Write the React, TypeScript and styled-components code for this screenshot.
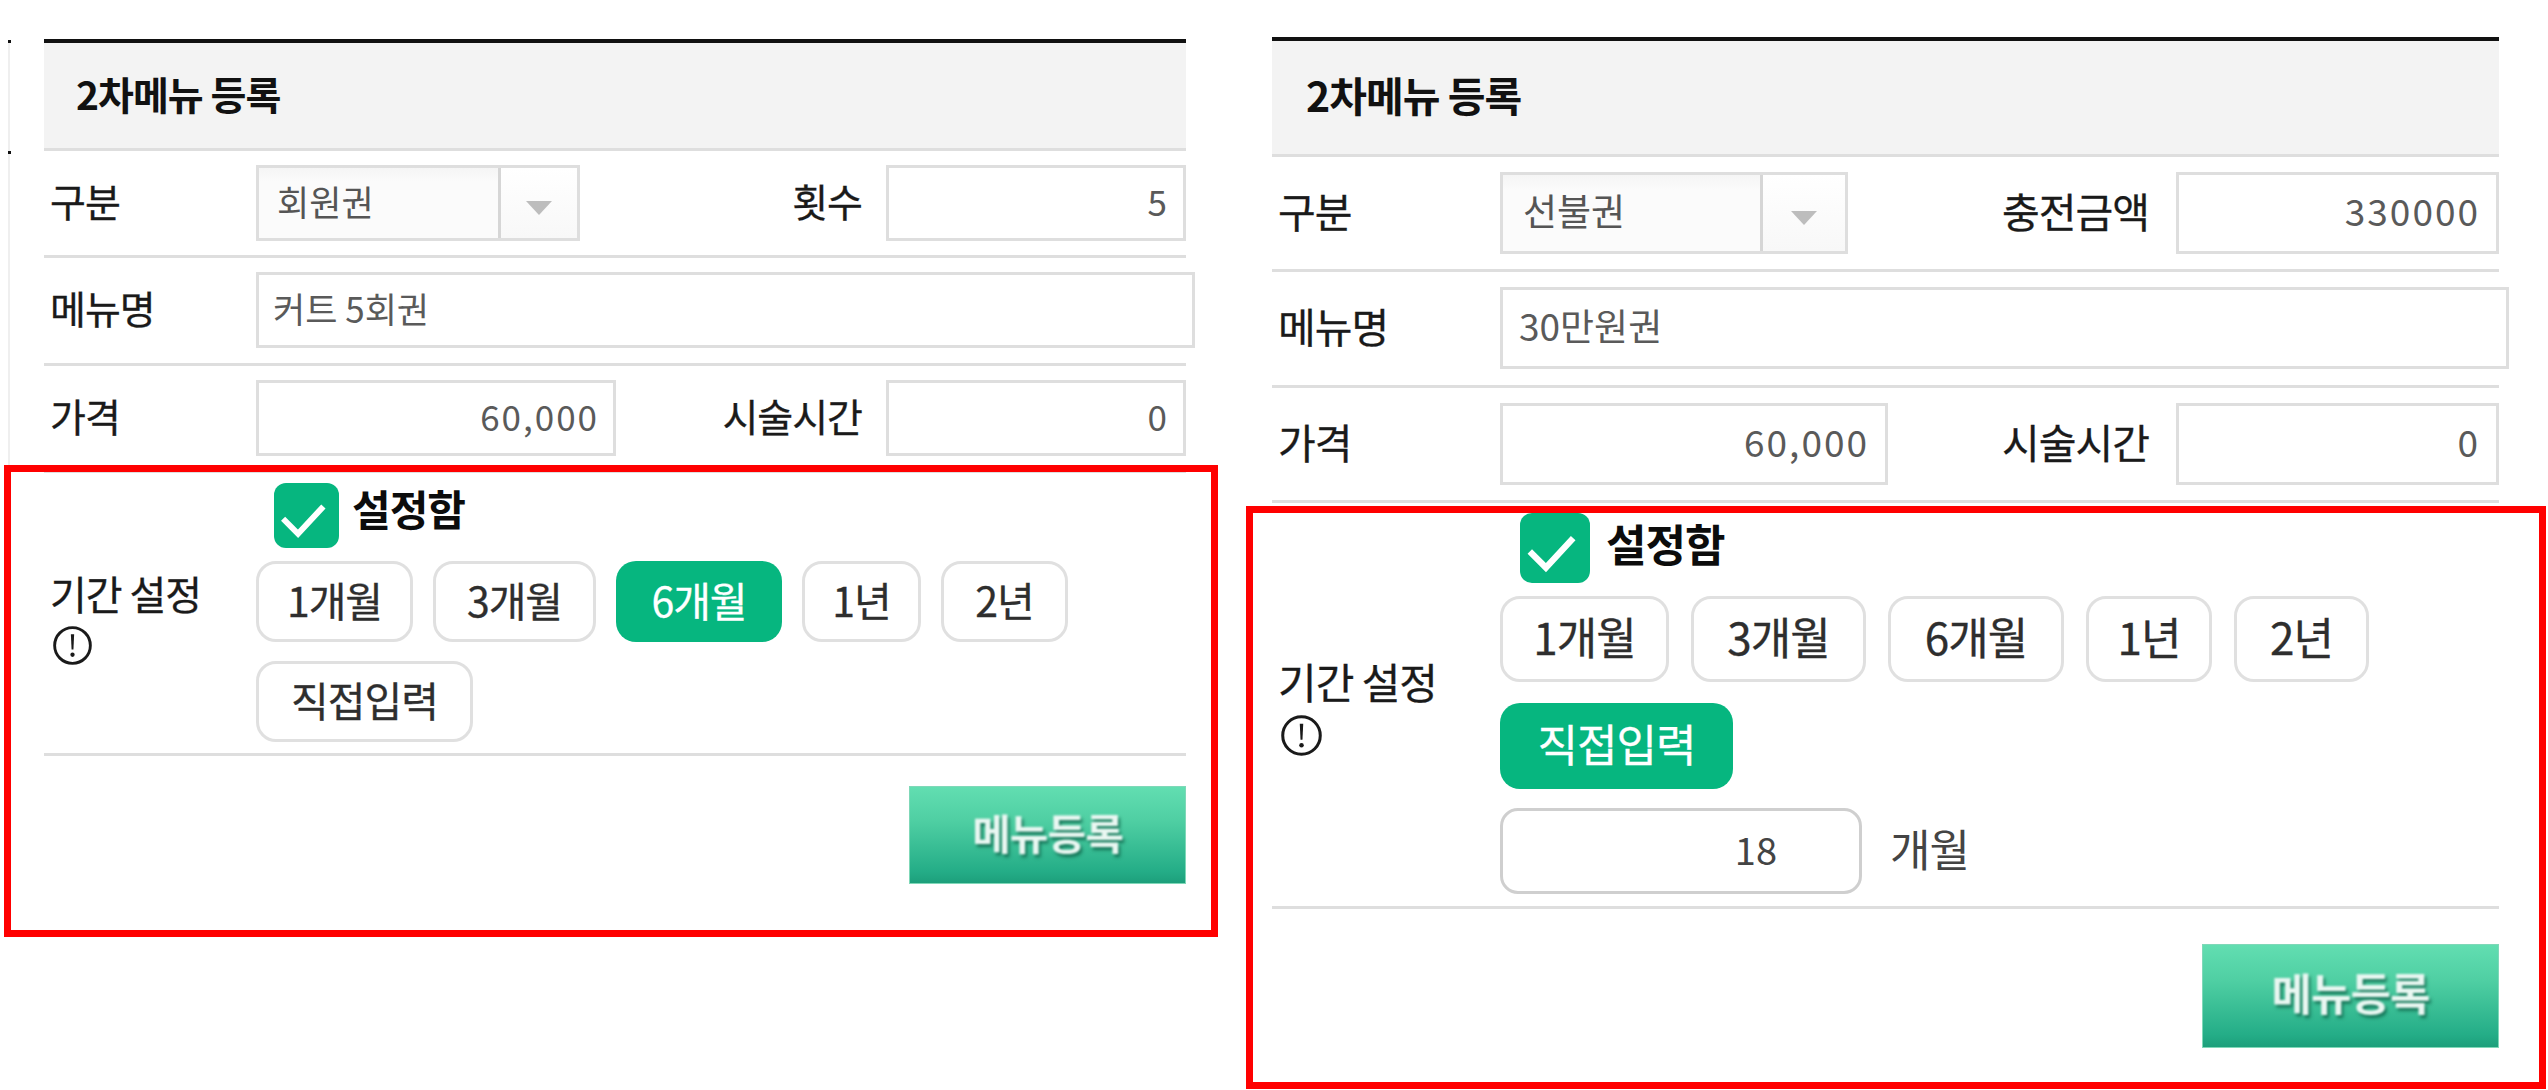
import * as React from "react";
import styled, { createGlobalStyle, ThemeProvider } from "styled-components";

const GlobalStyle = createGlobalStyle`
  html, body {
    margin: 0;
    padding: 0;
    background: #ffffff;
  }
  * {
    box-sizing: border-box;
  }
`;

const smallTheme = {
  top: 39,
  left: 44,
  width: 1142,
  headH: 105,
  headPad: 32,
  headFont: 39,
  headLift: 6,
  rowPad: 14,
  labelW: 212,
  fieldH: 76,
  font: 39,
  valueFont: 35,
  boxPad: 14,
  selectPad: 18,
  selectW: 324,
  arrowW: 76,
  sideLabelGap: 24,
  sideW: 300,
  nameW: 939,
  priceW: 360,
  checkH: 65,
  checkLeft: 18,
  checkGap: 13,
  checkFont: 42,
  checkLift: 16,
  pillH: 81,
  pillGap: 20,
  pillRowGap: 19,
  pillFont: 41,
  periodFont: 40,
  periodTop: 12,
  sectionTop: 10,
  sectionGap: 13,
  sectionBottom: 11,
  infoSize: 39,
  buttonW: 277,
  buttonH: 98,
  buttonTop: 30,
  buttonFont: 42,
  frameTop: -8,
  frameLeft: -40,
  frameRight: -32,
  frameBottom: -53,
};

const largeTheme = {
  top: 37,
  left: 86,
  width: 1227,
  headH: 113,
  headPad: 34,
  headFont: 41,
  headLift: 8,
  rowPad: 15,
  labelW: 228,
  fieldH: 82,
  font: 41,
  valueFont: 37,
  boxPad: 16,
  selectPad: 20,
  selectW: 348,
  arrowW: 82,
  sideLabelGap: 27,
  sideW: 323,
  nameW: 1009,
  priceW: 388,
  checkH: 70,
  checkLeft: 20,
  checkGap: 16,
  checkFont: 44,
  checkLift: 10,
  pillH: 86,
  pillGap: 22,
  pillRowGap: 21,
  pillFont: 44,
  periodFont: 42,
  periodTop: 8,
  sectionTop: 10,
  sectionGap: 13,
  sectionBottom: 12,
  infoSize: 41,
  buttonW: 297,
  buttonH: 104,
  buttonTop: 35,
  buttonFont: 44,
  frameTop: 3,
  frameLeft: -26,
  frameRight: -47,
  frameBottom: -41,
};

type Metrics = typeof smallTheme;
const m = (key: keyof Metrics) => (p: { theme?: unknown }) => (p.theme as Metrics)[key];

const Page = styled.div`
  position: relative;
  display: flex;
  align-items: flex-start;
  width: 2548px;
  height: 1090px;
  overflow: hidden;
  font-family: "Noto Sans CJK KR", "Noto Sans", sans-serif;
  color: #222222;
`;

/* leftover crop marks along the left edge of the first capture */
const CropEdge = styled.div`
  position: absolute;
  top: 40px;
  left: 8px;
  width: 2px;
  height: 426px;
  background: #efefef;
  &::before,
  &::after {
    content: "";
    position: absolute;
    left: 0;
    width: 3px;
    height: 3px;
    background: #111111;
  }
  &::before {
    top: 0;
  }
  &::after {
    top: 111px;
  }
`;

const Panel = styled.section`
  flex: none;
  width: ${m("width")}px;
  margin-top: ${m("top")}px;
  margin-left: ${m("left")}px;
  border-top: 4px solid #111111;
`;

const Head = styled.header`
  display: flex;
  align-items: center;
  height: ${(p) => (p.theme as Metrics).headH - (p.theme as Metrics).headLift}px;
  padding: 0 0 ${m("headLift")}px ${m("headPad")}px;
  background: #f3f3f3;
  border-bottom: 3px solid #dedede;
  font-size: ${m("headFont")}px;
  font-weight: 700;
  letter-spacing: -1px;
  color: #111111;
  box-sizing: content-box;
`;

const Row = styled.div<{ $tall?: boolean }>`
  display: flex;
  align-items: center;
  padding-top: ${m("rowPad")}px;
  padding-bottom: ${(p) => (p.theme as Metrics).rowPad + (p.$tall ? 1 : 0)}px;
  border-bottom: 3px solid #dedede;
`;

const Label = styled.div`
  flex: none;
  width: ${m("labelW")}px;
  padding: 0 0 6px 6px;
  font-size: ${m("font")}px;
  line-height: 1;
  letter-spacing: -1px;
  color: #1a1a1a;
  -webkit-text-stroke: 0.3px #1a1a1a;
`;

const SideLabel = styled.div`
  flex: 1;
  padding: 0 ${m("sideLabelGap")}px 6px 0;
  text-align: right;
  font-size: ${m("font")}px;
  line-height: 1;
  letter-spacing: -1px;
  color: #1a1a1a;
  -webkit-text-stroke: 0.3px #1a1a1a;
`;

const Field = styled.div<{ $width: keyof Metrics; $align?: "left" | "right" }>`
  flex: none;
  display: flex;
  align-items: center;
  justify-content: ${(p) => (p.$align === "right" ? "flex-end" : "flex-start")};
  width: ${(p) => (p.theme as Metrics)[p.$width]}px;
  height: ${m("fieldH")}px;
  padding: 0 ${m("boxPad")}px 6px;
  border: 3px solid #dedede;
  background: #ffffff;
  font-size: ${m("valueFont")}px;
  letter-spacing: ${(p) => (p.$align === "right" ? "2px" : "0")};
  color: #5a5a5a;
`;

const Select = styled.div`
  flex: none;
  display: flex;
  width: ${m("selectW")}px;
  height: ${m("fieldH")}px;
  border: 3px solid #dedede;
`;

const SelectValue = styled.div`
  flex: 1;
  display: flex;
  align-items: center;
  padding: 0 0 6px ${m("selectPad")}px;
  background: linear-gradient(#f5f5f5, #fbfbfb 20%);
  border-right: 3px solid #d6d6d6;
  font-size: ${m("valueFont")}px;
  color: #555555;
`;

const SelectArrow = styled.div`
  flex: none;
  display: flex;
  align-items: center;
  justify-content: center;
  width: ${m("arrowW")}px;
  padding-top: 10px;
  background: linear-gradient(#ffffff, #f8f8f8);
  svg {
    display: block;
  }
`;

const Section = styled.div`
  position: relative;
`;

const RedFrame = styled.div`
  position: absolute;
  top: ${m("frameTop")}px;
  left: ${m("frameLeft")}px;
  right: ${m("frameRight")}px;
  bottom: ${m("frameBottom")}px;
  border: 7px solid #ff0000;
  pointer-events: none;
`;

const PeriodRow = styled.div`
  display: flex;
  align-items: center;
  padding: ${m("sectionTop")}px 0 ${m("sectionBottom")}px;
  border-bottom: 3px solid #dedede;
`;

const PeriodLabel = styled(Label)`
  display: flex;
  flex-direction: column;
  align-items: flex-start;
  gap: 13px;
  padding: ${m("periodTop")}px 0 0 6px;
  font-size: ${m("periodFont")}px;
`;

const InfoIcon = styled.svg`
  display: block;
  width: ${m("infoSize")}px;
  height: ${m("infoSize")}px;
  margin-left: 3px;
`;

const Options = styled.div`
  flex: 1;
  display: flex;
  flex-direction: column;
  gap: ${m("pillRowGap")}px;
`;

const CheckRow = styled.div`
  display: flex;
  align-items: center;
  gap: ${m("checkGap")}px;
  height: ${m("checkH")}px;
  margin-left: ${m("checkLeft")}px;
  margin-bottom: ${(p) => (p.theme as Metrics).sectionGap - (p.theme as Metrics).pillRowGap}px;
`;

const CheckBox = styled.span`
  flex: none;
  display: block;
  width: ${m("checkH")}px;
  height: ${m("checkH")}px;
  border-radius: 12px;
  background: #06b67f;
  svg {
    display: block;
    width: 100%;
    height: 100%;
  }
`;

const CheckLabel = styled.span`
  padding-bottom: ${m("checkLift")}px;
  font-size: ${m("checkFont")}px;
  font-weight: 700;
  letter-spacing: -1px;
  color: #0c0c0c;
`;

const PillRow = styled.div`
  display: flex;
  gap: ${m("pillGap")}px;
`;

const Pill = styled.div<{ $width: number; $active?: boolean }>`
  flex: none;
  display: flex;
  align-items: center;
  justify-content: center;
  width: ${(p) => p.$width}px;
  height: ${m("pillH")}px;
  padding-bottom: 6px;
  border: ${(p) => (p.$active ? "none" : "3px solid #e0e0e0")};
  border-radius: 20px;
  background: ${(p) => (p.$active ? "#06b67f" : "#ffffff")};
  font-size: ${m("pillFont")}px;
  letter-spacing: -1px;
  color: ${(p) => (p.$active ? "#ffffff" : "#2e2e2e")};
  -webkit-text-stroke: 0.3px ${(p) => (p.$active ? "#ffffff" : "#2e2e2e")};
`;

const CustomRow = styled.div`
  display: flex;
  align-items: center;
  gap: 28px;
  margin-top: -2px;
`;

const CustomInput = styled.div`
  display: flex;
  align-items: center;
  justify-content: flex-end;
  width: 362px;
  height: 86px;
  padding: 0 82px 6px 0;
  border: 3px solid #cfcfcf;
  border-radius: 18px;
  font-size: 38px;
  color: #444444;
`;

const Unit = styled.span`
  padding-bottom: 6px;
  font-size: 44px;
  letter-spacing: -1px;
  color: #444444;
`;

const ButtonRow = styled.div`
  display: flex;
  justify-content: flex-end;
  padding-top: ${m("buttonTop")}px;
`;

const SubmitButton = styled.div`
  display: flex;
  align-items: center;
  justify-content: center;
  width: ${m("buttonW")}px;
  height: ${m("buttonH")}px;
  padding-bottom: 8px;
  border: 1px solid #7fd8b8;
  background: linear-gradient(#62deb1, #4fcfa3 35%, #24ad87 88%, #1d9f7b);
`;

const SubmitText = styled.span`
  font-size: ${m("buttonFont")}px;
  font-weight: 700;
  letter-spacing: -1px;
  color: #eaf7f2;
  text-shadow: 2px 3px 3px rgba(10, 90, 65, 0.75);
  filter: blur(0.8px);
`;

const ArrowDown = () => (
  <svg width="26" height="14" viewBox="0 0 26 14">
    <path d="M0 0H26L13 14Z" fill="#bdbdbd" />
  </svg>
);

const CheckMark = () => (
  <svg viewBox="0 0 100 100">
    <polyline points="14,55 37,78 76,36" fill="none" stroke="#ffffff" strokeWidth="9" />
  </svg>
);

const Info = () => (
  <InfoIcon viewBox="0 0 38 38">
    <circle cx="19" cy="19" r="17.4" fill="none" stroke="#1a1a1a" strokeWidth="2.8" />
    <path d="M17.4 8h3.2l-.7 15h-1.8Z" fill="#1a1a1a" />
    <circle cx="19" cy="28" r="2.1" fill="#1a1a1a" />
  </InfoIcon>
);

type PillItem = { text: string; width: number; active?: boolean };

type FormProps = {
  theme: Metrics;
  kind: string;
  sideLabel: string;
  sideValue: string;
  name: string;
  rows: PillItem[][];
  customMonths?: string;
};

const MenuForm = ({ theme, kind, sideLabel, sideValue, name, rows, customMonths }: FormProps) => (
  <ThemeProvider theme={theme}>
    <Panel>
      <Head>2차메뉴 등록</Head>
      <Row>
        <Label>구분</Label>
        <Select>
          <SelectValue>{kind}</SelectValue>
          <SelectArrow>
            <ArrowDown />
          </SelectArrow>
        </Select>
        <SideLabel>{sideLabel}</SideLabel>
        <Field $width="sideW" $align="right">{sideValue}</Field>
      </Row>
      <Row $tall>
        <Label>메뉴명</Label>
        <Field $width="nameW">{name}</Field>
      </Row>
      <Row>
        <Label>가격</Label>
        <Field $width="priceW" $align="right">60,000</Field>
        <SideLabel>시술시간</SideLabel>
        <Field $width="sideW" $align="right">0</Field>
      </Row>
      <Section>
        <PeriodRow>
          <PeriodLabel>
            기간 설정
            <Info />
          </PeriodLabel>
          <Options>
            <CheckRow>
              <CheckBox>
                <CheckMark />
              </CheckBox>
              <CheckLabel>설정함</CheckLabel>
            </CheckRow>
            {rows.map((row) => (
              <PillRow key={row[0].text}>
                {row.map((pill) => (
                  <Pill key={pill.text} $width={pill.width} $active={pill.active}>
                    {pill.text}
                  </Pill>
                ))}
              </PillRow>
            ))}
            {customMonths && (
              <CustomRow>
                <CustomInput>{customMonths}</CustomInput>
                <Unit>개월</Unit>
              </CustomRow>
            )}
          </Options>
        </PeriodRow>
        <ButtonRow>
          <SubmitButton>
            <SubmitText>메뉴등록</SubmitText>
          </SubmitButton>
        </ButtonRow>
        <RedFrame />
      </Section>
    </Panel>
  </ThemeProvider>
);

export default function App() {
  return (
    <Page>
      <GlobalStyle />
      <CropEdge />
      <MenuForm
        theme={smallTheme}
        kind="회원권"
        sideLabel="횟수"
        sideValue="5"
        name="커트 5회권"
        rows={[
          [
            { text: "1개월", width: 157 },
            { text: "3개월", width: 163 },
            { text: "6개월", width: 166, active: true },
            { text: "1년", width: 119 },
            { text: "2년", width: 127 },
          ],
          [{ text: "직접입력", width: 217 }],
        ]}
      />
      <MenuForm
        theme={largeTheme}
        kind="선불권"
        sideLabel="충전금액"
        sideValue="330000"
        name="30만원권"
        customMonths="18"
        rows={[
          [
            { text: "1개월", width: 169 },
            { text: "3개월", width: 175 },
            { text: "6개월", width: 176 },
            { text: "1년", width: 126 },
            { text: "2년", width: 135 },
          ],
          [{ text: "직접입력", width: 233, active: true }],
        ]}
      />
    </Page>
  );
}
